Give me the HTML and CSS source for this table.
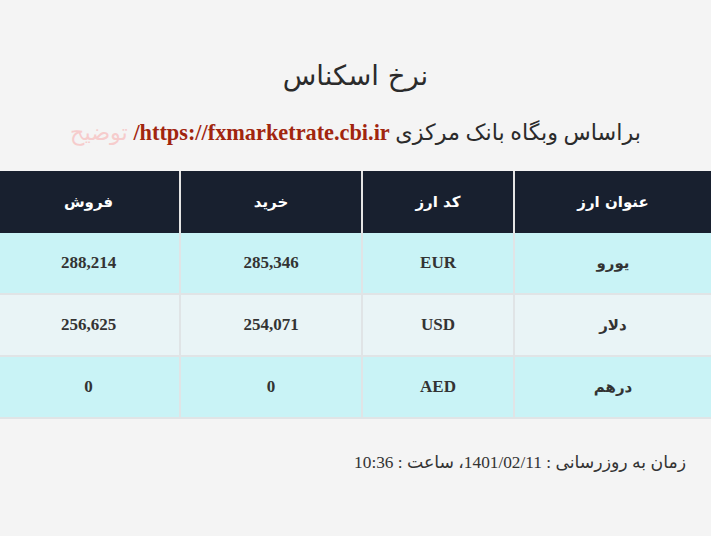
FILE: index.html
```html
<!DOCTYPE html>
<html lang="fa" dir="rtl">
<head>
<meta charset="utf-8">
<title>نرخ اسکناس</title>
<link rel="stylesheet" href="styles.css">
</head>
<body>
<div class="page">
  <h1 class="title">نرخ اسکناس</h1>
  <p class="source">براساس وبگاه بانک مرکزی <a class="link" href="#">https://fxmarketrate.cbi.ir/</a> <span class="note">توضیح</span></p>
  <table class="rates">
    <thead>
      <tr>
        <th class="c-name">عنوان ارز</th>
        <th class="c-code">کد ارز</th>
        <th class="c-buy">خرید</th>
        <th class="c-sell">فروش</th>
      </tr>
    </thead>
    <tbody>
      <tr class="odd">
        <td class="fa">یورو</td>
        <td class="num">EUR</td>
        <td class="num">285,346</td>
        <td class="num">288,214</td>
      </tr>
      <tr class="even">
        <td class="fa">دلار</td>
        <td class="num">USD</td>
        <td class="num">254,071</td>
        <td class="num">256,625</td>
      </tr>
      <tr class="odd">
        <td class="fa">درهم</td>
        <td class="num">AED</td>
        <td class="num">0</td>
        <td class="num">0</td>
      </tr>
    </tbody>
  </table>
  <p class="updated">زمان به روزرسانی : 1401/02/11، ساعت : 10:36</p>
</div>
</body>
</html>
```

FILE: styles.css
```css
html, body {
  margin: 0;
  padding: 0;
  background: #f4f4f4;
}
body {
  font-family: "Liberation Serif", "DejaVu Sans", serif;
  color: #333;
}
.page {
  padding-top: 56px;
}
.title {
  margin: 0;
  text-align: center;
  font-family: "DejaVu Sans", sans-serif;
  font-weight: normal;
  font-size: 27.5px;
  line-height: 38px;
  color: #2b2b2b;
}
.source {
  margin: 23px 0 0;
  text-align: center;
  font-family: "Liberation Serif", "DejaVu Sans", serif;
  font-size: 22.3px;
  line-height: 32px;
  color: #2b2b2b;
}
.link {
  color: #a1250e;
  font-weight: bold;
  text-decoration: none;
}
.note {
  color: #f6cccc;
}
.rates {
  margin-top: 22px;
  width: 711px;
  border-collapse: collapse;
  table-layout: fixed;
}
.rates th {
  background: #18202f;
  color: #fff;
  font-family: "DejaVu Sans", sans-serif;
  font-weight: bold;
  font-size: 15px;
  height: 62px;
  padding: 0;
  border-left: 2px solid #e4e4e4;
  border-right: 2px solid #e4e4e4;
}
.rates th:first-child { border-right: none; }
.rates th:last-child { border-left: none; }
.c-name { width: 196px; }
.c-code { width: 150px; }
.c-buy { width: 180px; }
.c-sell { width: 181px; }
.rates td {
  height: 60px;
  padding: 0;
  text-align: center;
  border: 2px solid #e0e4e6;
  color: #333;
}
.rates td:first-child { border-right: none; }
.rates td:last-child { border-left: none; }
.rates tbody tr:first-child td { border-top: none; }
.rates tr.odd td { background: #c9f3f6; }
.rates tr.even td { background: #e9f4f6; }
.rates td.num {
  font-family: "Liberation Serif", serif;
  font-weight: bold;
  font-size: 17px;
}
.rates td.fa {
  font-family: "DejaVu Sans", sans-serif;
  font-weight: bold;
  font-size: 15px;
}
.updated {
  margin: 32px 25px 0 0;
  text-align: right;
  font-family: "Liberation Serif", "DejaVu Sans", serif;
  font-size: 17.3px;
  line-height: 24px;
  color: #333;
}
```
